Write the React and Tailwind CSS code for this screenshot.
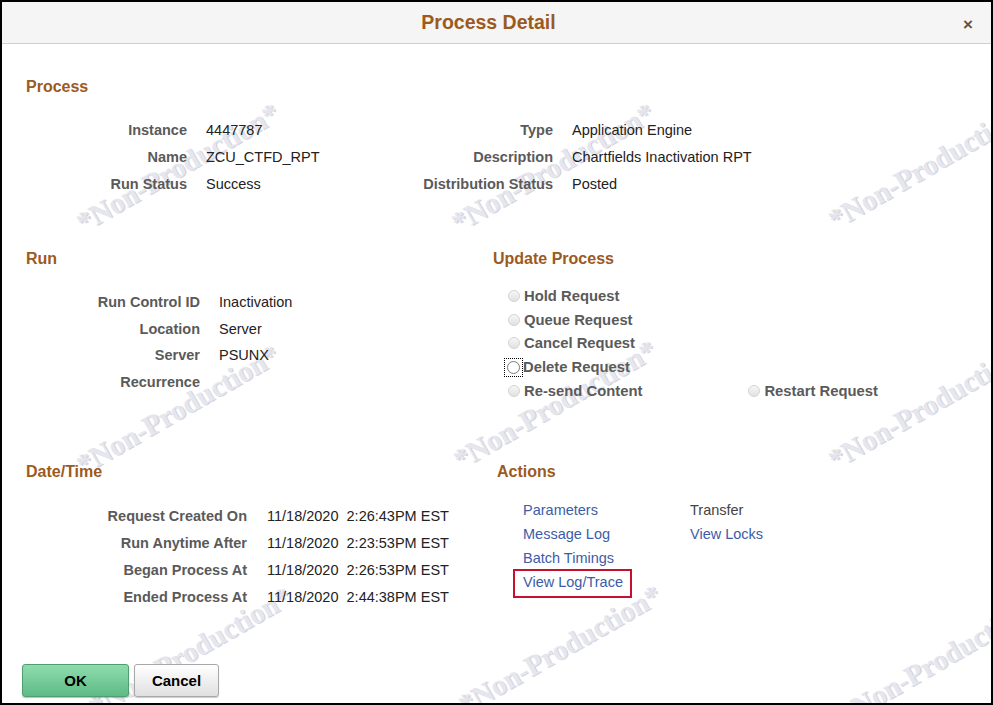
import React from 'react';

const watermarks = [
    'left-[178px] top-[168px]',
    'left-[553px] top-[168px]',
    'left-[930px] top-[165px]',
    'left-[178px] top-[410px]',
    'left-[555px] top-[405px]',
    'left-[930px] top-[405px]',
    'left-[190px] top-[652px]',
    'left-[560px] top-[650px]',
    'left-[940px] top-[660px]',
];

const processRows = [
    ['Instance', '4447787', 'Type', 'Application Engine'],
    ['Name', 'ZCU_CTFD_RPT', 'Description', 'Chartfields Inactivation RPT'],
    ['Run Status', 'Success', 'Distribution Status', 'Posted'],
];

const runRows = [
    ['Run Control ID', 'Inactivation'],
    ['Location', 'Server'],
    ['Server', 'PSUNX'],
    ['Recurrence', ''],
];

const dateRows = [
    ['Request Created On', '11/18/2020  2:26:43PM EST'],
    ['Run Anytime After', '11/18/2020  2:23:53PM EST'],
    ['Began Process At', '11/18/2020  2:26:53PM EST'],
    ['Ended Process At', '11/18/2020  2:44:38PM EST'],
];

function SectionTitle({children}) {
    return <h2 className="h-[20px] leading-[20px] text-[16px] font-bold text-[#9c5a1d]">{children}</h2>;
}

function Radio({label, focused}) {
    return (
        <div className="flex h-[23.75px] items-center">
            {focused ? (
                <span className="flex h-[17px] w-[17px] items-center justify-center outline-1 outline-dotted outline-black -ml-[3px] mr-[1px]">
                    <span className="h-[13px] w-[13px] rounded-full border border-[#7a7a7a] bg-white"/>
                </span>
            ) : (
                <span className="mr-[4px] h-[12px] w-[12px] rounded-full border border-[#d4d4d4] bg-gradient-to-b from-[#f6f6f6] to-[#e2e2e2]"/>
            )}
            <span className="text-[14.8px] font-bold text-[#5a5a5a]">{label}</span>
        </div>
    );
}

function Link({children}) {
    return <span className="text-[#3d5ca8]">{children}</span>;
}

export default function App() {
    return (
        <div
            className="relative h-[705px] w-[993px] overflow-hidden border-2 border-black bg-white text-[14.5px] text-[#222]"
            style={{fontFamily: '"Liberation Sans", Arial, sans-serif'}}
        >
            {/* watermark layer */}
            <div className="pointer-events-none absolute inset-0 -m-[2px]">
                {watermarks.map((pos) => (
                    <span
                        key={pos}
                        className={`absolute ${pos} -translate-x-1/2 -translate-y-1/2 -rotate-30 whitespace-nowrap text-[29px] font-bold text-[#e6e6ee] [text-shadow:1px_1px_0_#d2d2da]`}
                        style={{fontFamily: '"Liberation Serif", "Times New Roman", serif'}}
                    >
                        *Non-Production*
                    </span>
                ))}
            </div>

            <div className="relative">
                <header className="relative flex h-[42px] items-center justify-center border-b border-[#cfcfcf] bg-[#f5f5f5] pr-[16px]">
                    <h1 className="text-[19.5px] font-bold text-[#9c5a1d]">Process Detail</h1>
                    <span className="absolute right-[18px] top-[10px] text-[17px] font-bold text-[#555]">×</span>
                </header>

                {/* Process */}
                <section className="mt-[33px] pl-[24px]">
                    <SectionTitle>Process</SectionTitle>
                </section>
                <div className="mt-[20.5px]">
                    {processRows.map(([l1, v1, l2, v2]) => (
                        <div key={l1} className="flex h-[27px] items-center">
                            <span className="w-[185px] text-right font-bold text-[#5a5a5a]">{l1}</span>
                            <span className="ml-[19px] w-[200px]">{v1}</span>
                            <span className="w-[147px] text-right font-bold text-[#5a5a5a]">{l2}</span>
                            <span className="ml-[19px]">{v2}</span>
                        </div>
                    ))}
                </div>

                {/* Run / Update Process */}
                <div className="mt-[50.5px] flex items-start">
                    <section className="w-[491px]">
                        <div className="pl-[24px]"><SectionTitle>Run</SectionTitle></div>
                        <div className="mt-[20.5px]">
                            {runRows.map(([l, v]) => (
                                <div key={l} className="flex h-[26.7px] items-center">
                                    <span className="w-[198px] text-right font-bold text-[#5a5a5a]">{l}</span>
                                    <span className="ml-[19px]">{v}</span>
                                </div>
                            ))}
                        </div>
                    </section>
                    <section className="flex-1">
                        <SectionTitle>Update Process</SectionTitle>
                        <div className="mt-[15px] flex">
                            <div className="pl-[15px]">
                                <Radio label="Hold Request"/>
                                <Radio label="Queue Request"/>
                                <Radio label="Cancel Request"/>
                                <Radio label="Delete Request" focused/>
                                <Radio label="Re-send Content"/>
                            </div>
                            <div className="ml-[106px] flex flex-col justify-end">
                                <Radio label="Restart Request"/>
                            </div>
                        </div>
                    </section>
                </div>

                {/* Date/Time / Actions */}
                <div className="mt-[59px] flex items-start">
                    <section className="w-[495px]">
                        <div className="pl-[24px]"><SectionTitle>Date/Time</SectionTitle></div>
                        <div className="mt-[21.5px]">
                            {dateRows.map(([l, v]) => (
                                <div key={l} className="flex h-[27px] items-center">
                                    <span className="w-[245px] text-right font-bold text-[#5a5a5a]">{l}</span>
                                    <span className="ml-[20px] whitespace-pre">{v}</span>
                                </div>
                            ))}
                        </div>
                    </section>
                    <section className="flex-1">
                        <SectionTitle>Actions</SectionTitle>
                        <div className="mt-[17px] flex pl-[26px]">
                            <div className="w-[167px]">
                                <div className="flex h-[24px] items-center"><Link>Parameters</Link></div>
                                <div className="flex h-[24px] items-center"><Link>Message Log</Link></div>
                                <div className="flex h-[24px] items-center"><Link>Batch Timings</Link></div>
                                <div className="flex h-[24px] items-center">
                                    <span className="relative">
                                        <Link>View Log/Trace</Link>
                                        <span className="absolute -left-[10px] -right-[9px] -top-[3px] -bottom-[4px] border-2 border-[#c8102e]"/>
                                    </span>
                                </div>
                            </div>
                            <div>
                                <div className="flex h-[24px] items-center text-[#444]">Transfer</div>
                                <div className="flex h-[24px] items-center"><Link>View Locks</Link></div>
                            </div>
                        </div>
                    </section>
                </div>

                {/* Buttons */}
                <div className="mt-[53px] flex gap-[5px] pl-[20px]">
                    <button className="h-[33px] w-[107px] rounded-[3px] border border-[#4f9e70] bg-gradient-to-b from-[#8fdcad] to-[#5dbb86] text-[15px] font-bold text-black shadow-[0_1px_1px_rgba(0,0,0,0.25)]">
                        OK
                    </button>
                    <button className="h-[33px] w-[85px] rounded-[3px] border border-[#a8a8a8] bg-gradient-to-b from-white to-[#e0e0e0] text-[15px] font-bold text-black shadow-[0_1px_1px_rgba(0,0,0,0.2)]">
                        Cancel
                    </button>
                </div>
            </div>
        </div>
    );
}
